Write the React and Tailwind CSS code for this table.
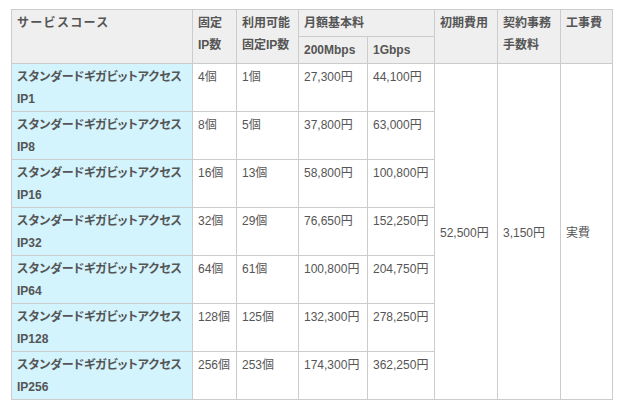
import React from "react";

const rows = [
  ["IP1", "4個", "1個", "27,300円", "44,100円"],
  ["IP8", "8個", "5個", "37,800円", "63,000円"],
  ["IP16", "16個", "13個", "58,800円", "100,800円"],
  ["IP32", "32個", "29個", "76,650円", "152,250円"],
  ["IP64", "64個", "61個", "100,800円", "204,750円"],
  ["IP128", "128個", "125個", "132,300円", "278,250円"],
  ["IP256", "256個", "253個", "174,300円", "362,250円"],
];

const th = "border border-[#cccccc] bg-[#efefef] align-top px-[5px] pt-[2px] pb-0 text-left font-bold text-[#555555] leading-[22px]";
const td = "border border-[#cccccc] align-top px-[5px] pt-[2px] pb-0 text-left text-[#555555] leading-[22px] whitespace-nowrap";

export default function App() {
  return (
    <div className="w-[626px] h-[409px] bg-white pt-[9px] pl-[11px] text-[12px] [font-family:'Liberation_Sans','Noto_Sans_CJK_JP',sans-serif] [font-feature-settings:'palt']">
      <table className="table-fixed border-collapse w-[601px]">
        <colgroup>
          <col className="w-[181px]" />
          <col className="w-[44px]" />
          <col className="w-[62px]" />
          <col className="w-[69px]" />
          <col className="w-[67px]" />
          <col className="w-[63px]" />
          <col className="w-[63px]" />
          <col className="w-[52px]" />
        </colgroup>
        <thead>
          <tr className="h-[27px]">
            <th rowSpan={2} className={th + " [font-feature-settings:normal] tracking-[1.3px]"}>サービスコース</th>
            <th rowSpan={2} className={th}>固定<br />IP数</th>
            <th rowSpan={2} className={th}>利用可能<br />固定IP数</th>
            <th colSpan={2} className={th}>月額基本料</th>
            <th rowSpan={2} className={th}>初期費用</th>
            <th rowSpan={2} className={th}>契約事務<br />手数料</th>
            <th rowSpan={2} className={th}>工事費</th>
          </tr>
          <tr className="h-[27px]">
            <th className={th}>200Mbps</th>
            <th className={th}>1Gbps</th>
          </tr>
        </thead>
        <tbody>
          {rows.map((r, i) => (
            <tr key={r[0]} className="h-[48px]">
              <td className={td + " bg-[#d3f3fd] font-bold"}>
                スタンダードギガビットアクセス
                <br />
                {r[0]}
              </td>
              <td className={td}>{r[1]}</td>
              <td className={td}>{r[2]}</td>
              <td className={td}>{r[3]}</td>
              <td className={td}>{r[4]}</td>
              {i === 0 && (
                <>
                  <td rowSpan={7} className={td + " !align-middle"}>52,500円</td>
                  <td rowSpan={7} className={td + " !align-middle"}>3,150円</td>
                  <td rowSpan={7} className={td + " !align-middle"}>実費</td>
                </>
              )}
            </tr>
          ))}
        </tbody>
      </table>
    </div>
  );
}
